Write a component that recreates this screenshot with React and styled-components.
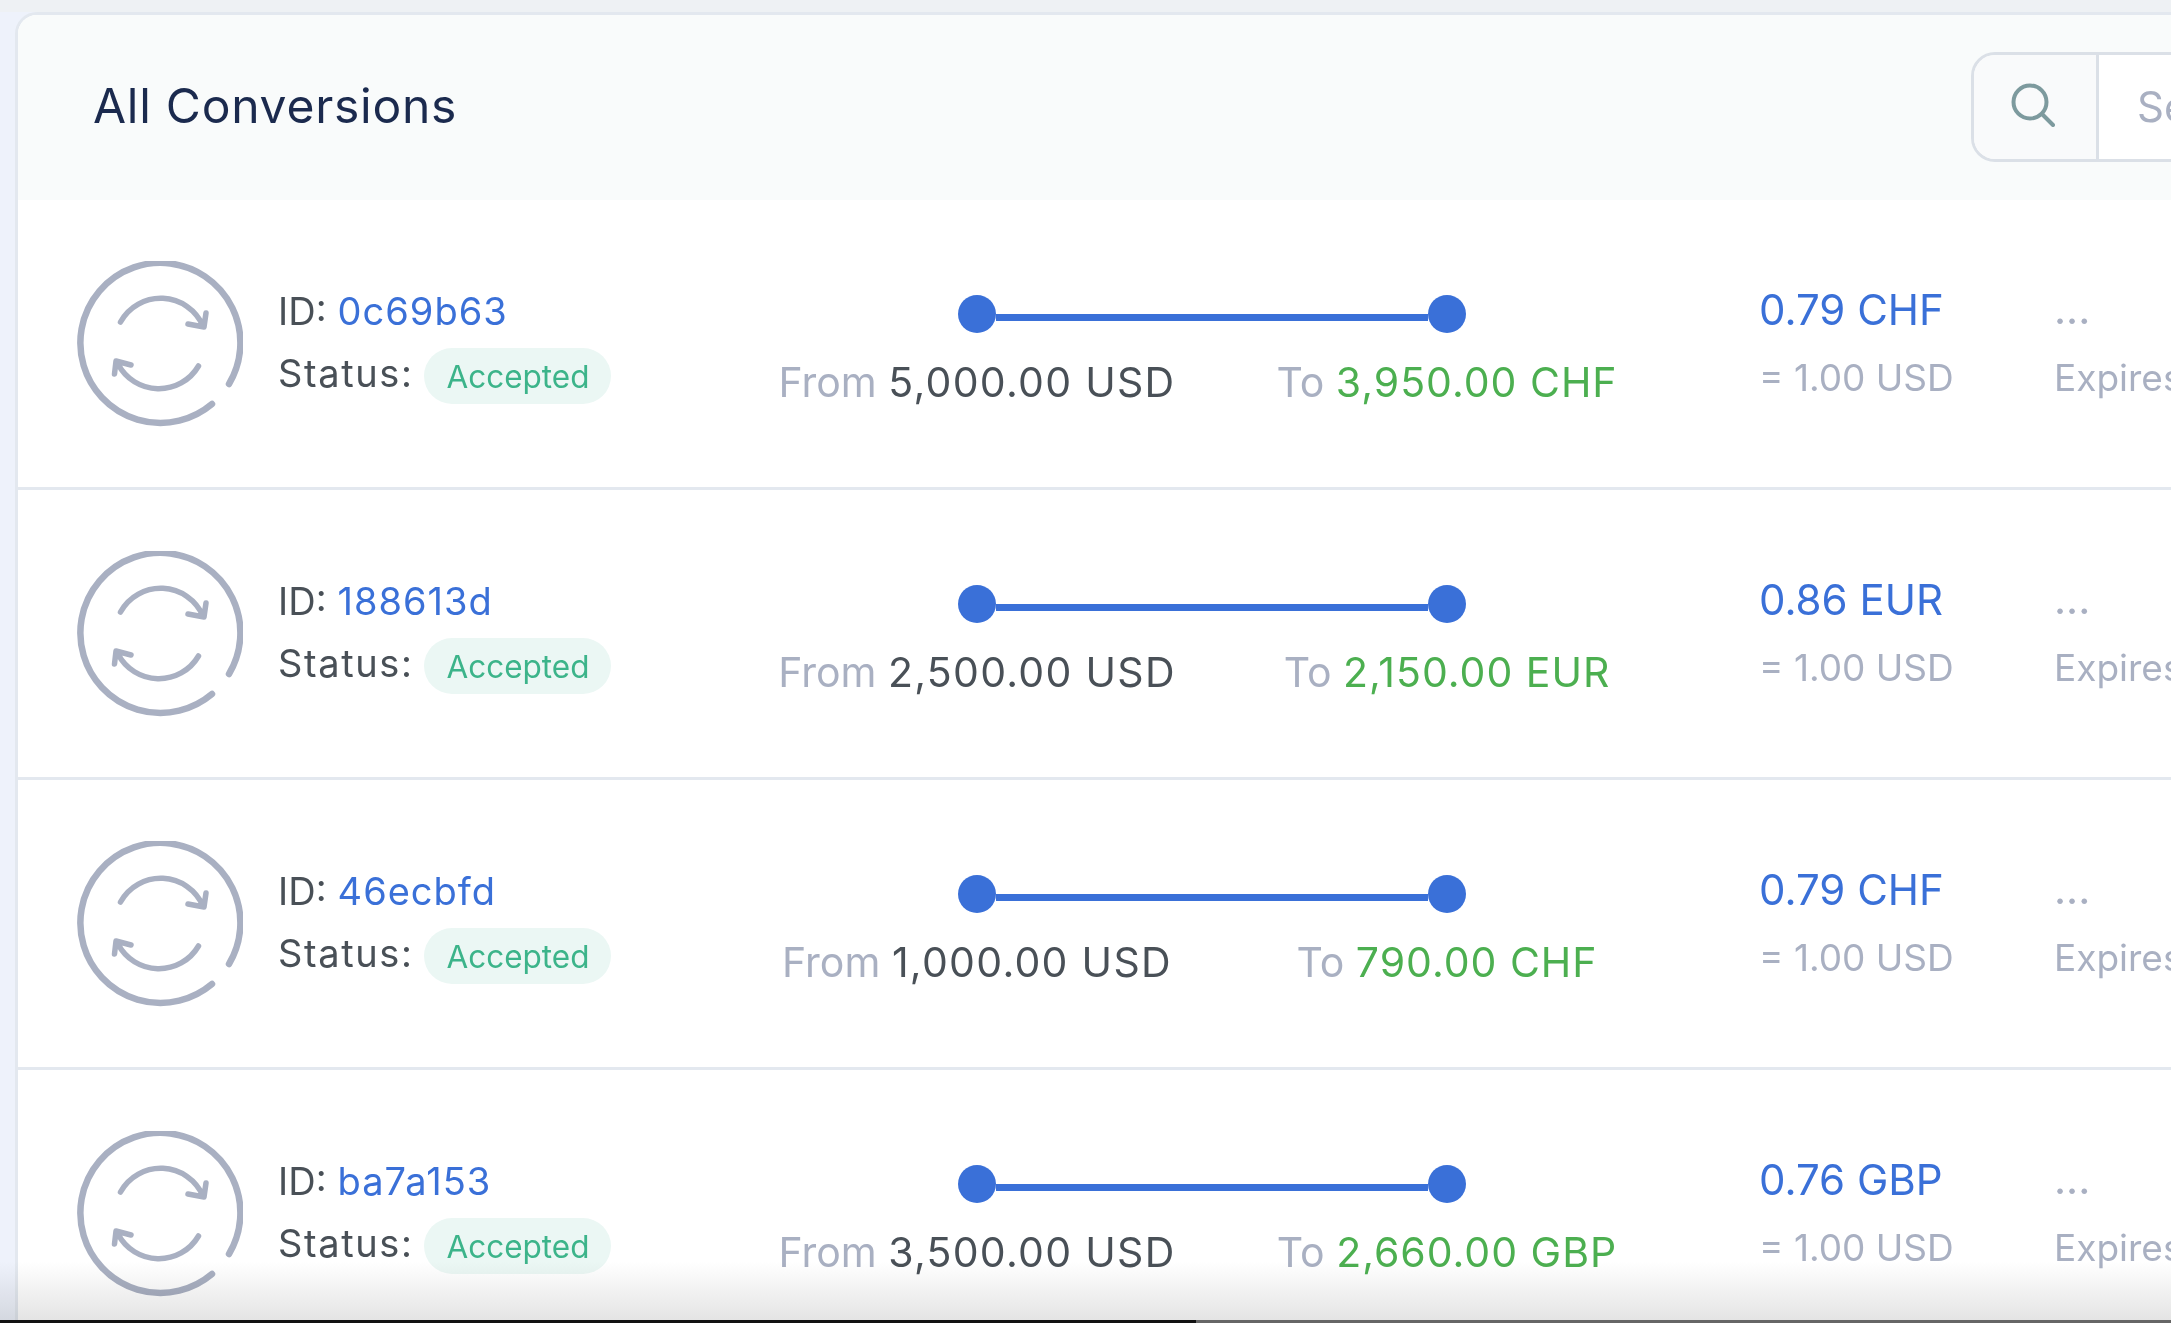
import React from "react";
import styled, { createGlobalStyle } from "styled-components";

const COLOR = {
  BLUE: "#3a70d8",
  GREEN: "#4caf50",
  DARK: "#495057",
  MUTED: "#a9b0c2",
  LINE: "#e3e8ef",
};

const CONVERSIONS = [
  { id: "0c69b63", from: "5,000.00 USD", to: "3,950.00 CHF", rate: "0.79 CHF" },
  { id: "188613d", from: "2,500.00 USD", to: "2,150.00 EUR", rate: "0.86 EUR" },
  { id: "46ecbfd", from: "1,000.00 USD", to: "790.00 CHF", rate: "0.79 CHF" },
  { id: "ba7a153", from: "3,500.00 USD", to: "2,660.00 GBP", rate: "0.76 GBP" },
];

const ConvertIcon = () => (
  <IconSvg viewBox="-83 -83 166 166">
    <path d="M69 40A80 80 0 1 0 52 60" strokeWidth="6.5" />
    <path d="M-39.5 -22A46 46 0 0 1 43 -18M46 -31L44 -17L28 -20" strokeWidth="5.5" />
    <path d="M38.5 22A46 46 0 0 1 -42 20M-45.5 30L-44 17L-29 21" strokeWidth="5.5" />
  </IconSvg>
);

const SearchIcon = () => (
  <SearchSvg viewBox="0 0 44 44">
    <circle cx="19" cy="19" r="16.5" />
    <path d="M31 31L42 42" />
  </SearchSvg>
);

const App = () => (
  <Page>
    <GlobalStyle />
    <Card>
      <Header>
        <Title>All Conversions</Title>
        <Search>
          <SearchAddon>
            <SearchIcon />
          </SearchAddon>
          <SearchInput>Search</SearchInput>
        </Search>
      </Header>
      {CONVERSIONS.map((item) => (
        <Row key={item.id}>
          <ConvertIcon />
          <Info>
            <InfoLine>
              ID: <Blue>{item.id}</Blue>
            </InfoLine>
            <InfoLine>
              <StatusLabel>Status:</StatusLabel> <Badge>Accepted</Badge>
            </InfoLine>
          </Info>
          <Transfer>
            <Track>
              <Dot />
              <TrackLine />
              <Dot />
            </Track>
            <Amounts>
              <Amount>
                <Muted>From</Muted> <Value>{item.from}</Value>
              </Amount>
              <Amount>
                <Muted>To</Muted> <Green>{item.to}</Green>
              </Amount>
            </Amounts>
          </Transfer>
          <Rate>
            <RateValue>{item.rate}</RateValue>
            <RateBase>= 1.00 USD</RateBase>
          </Rate>
          <Expiry>
            <ExpiryValue>...</ExpiryValue>
            <RateBase>Expires</RateBase>
          </Expiry>
        </Row>
      ))}
    </Card>
    <BottomFade />
    <BottomEdge />
  </Page>
);

const GlobalStyle = createGlobalStyle`
  html, body {
    margin: 0;
    padding: 0;
    overflow: hidden;
  }
  body {
    font-family: Inter, "Liberation Sans", sans-serif;
  }
`;

const Page = styled.div`
  position: relative;
  height: 1323px;
  width: 2171px;
  overflow: hidden;
  box-sizing: border-box;
  padding: 12px 0 0 15px;
  background: linear-gradient(#eef1f4 0, #eef1f4 12px, #eef2fb 12px);
`;

const Card = styled.div`
  width: 2400px;
  background: #fff;
  border: 3px solid ${COLOR.LINE};
  border-radius: 22px 0 0 0;
  overflow: hidden;
`;

const Header = styled.div`
  height: 185px;
  background: #f9fbfb;
  display: flex;
  align-items: center;
  justify-content: space-between;
  padding: 0 17px 0 75px;
`;

const Title = styled.h1`
  margin: 0 0 4px;
  font-size: 48px;
  font-weight: 400;
  letter-spacing: 0.75px;
  white-space: nowrap;
  color: #1b2a4e;
`;

const Search = styled.div`
  width: 430px;
  height: 110px;
  margin-bottom: 2px;
  display: flex;
  box-sizing: border-box;
  border: 3px solid #dbe0e7;
  border-radius: 24px;
  overflow: hidden;
`;

const SearchAddon = styled.div`
  width: 122px;
  flex: none;
  display: flex;
  align-items: center;
  justify-content: center;
  background: #f9fafb;
  border-right: 3px solid #dbe0e7;
`;

const SearchSvg = styled.svg`
  width: 44px;
  height: 44px;
  margin: 0 4px 4px 0;
  fill: none;
  stroke: #7d9a9e;
  stroke-width: 4;
  stroke-linecap: round;
`;

const SearchInput = styled.div`
  flex: 1;
  background: #fff;
  padding-left: 38px;
  display: flex;
  align-items: center;
  font-size: 42px;
  color: #a9b0c2;
`;

const Row = styled.div`
  height: 287px;
  display: flex;
  align-items: flex-start;
  padding-left: 59px;
  border-bottom: 3px solid ${COLOR.LINE};
`;

const IconSvg = styled.svg`
  width: 166px;
  height: 166px;
  margin-top: 61px;
  margin-right: 35px;
  flex: none;
  fill: none;
  stroke: ${COLOR.MUTED};
  stroke-linecap: round;
  stroke-linejoin: round;
`;

const Info = styled.div`
  width: 464px;
  flex: none;
  padding-top: 80px;
  font-size: 38px;
  color: ${COLOR.DARK};
`;

const InfoLine = styled.div`
  height: 62px;
  display: flex;
  align-items: center;
  gap: 11px;
`;

const StatusLabel = styled.span`
  letter-spacing: 1.6px;
`;

const Blue = styled.span`
  color: ${COLOR.BLUE};
  letter-spacing: 1px;
`;

const Value = styled.span`
  letter-spacing: 1.3px;
`;

const Green = styled.span`
  color: ${COLOR.GREEN};
  letter-spacing: 1px;
`;

const Muted = styled.span`
  color: ${COLOR.MUTED};
`;

const Badge = styled.span`
  height: 56px;
  margin-top: 6px;
  display: inline-flex;
  align-items: center;
  padding: 0 22px;
  border-radius: 28px;
  background: #ebf7f4;
  color: #3cb48a;
  font-size: 31.5px;
`;

const Transfer = styled.div`
  width: 940px;
  flex: none;
  padding-top: 95px;
`;

const Track = styled.div`
  width: 508px;
  margin: 0 auto;
  display: flex;
  align-items: center;
`;

const Dot = styled.div`
  width: 38px;
  height: 38px;
  flex: none;
  border-radius: 50%;
  background: ${COLOR.BLUE};
`;

const TrackLine = styled.div`
  flex: 1;
  height: 7px;
  margin-top: 6px;
  background: ${COLOR.BLUE};
`;

const Amounts = styled.div`
  display: grid;
  grid-template-columns: 1fr 1fr;
  margin-top: 19px;
`;

const Amount = styled.div`
  text-align: center;
  font-size: 41px;
  line-height: 60px;
  color: ${COLOR.DARK};
`;

const Rate = styled.div`
  width: 295px;
  flex: none;
  margin-left: 77px;
  padding-top: 76px;
`;

const RateValue = styled.div`
  height: 68px;
  line-height: 68px;
  font-size: 42px;
  color: ${COLOR.BLUE};
`;

const RateBase = styled.div`
  height: 68px;
  line-height: 68px;
  font-size: 37px;
  color: ${COLOR.MUTED};
`;

const Expiry = styled.div`
  padding-top: 75px;
`;

const ExpiryValue = styled(RateValue)`
  color: ${COLOR.MUTED};
  height: 69px;
`;

const BottomFade = styled.div`
  position: absolute;
  left: 0;
  right: 0;
  bottom: 3px;
  height: 58px;
  background: linear-gradient(#fff, #e4e4e4);
  mix-blend-mode: multiply;
`;

const BottomEdge = styled.div`
  position: absolute;
  left: 0;
  right: 0;
  bottom: 0;
  height: 3px;
  background: linear-gradient(90deg, #111 0, #111 1196px, #666 1196px);
`;

export default App;
